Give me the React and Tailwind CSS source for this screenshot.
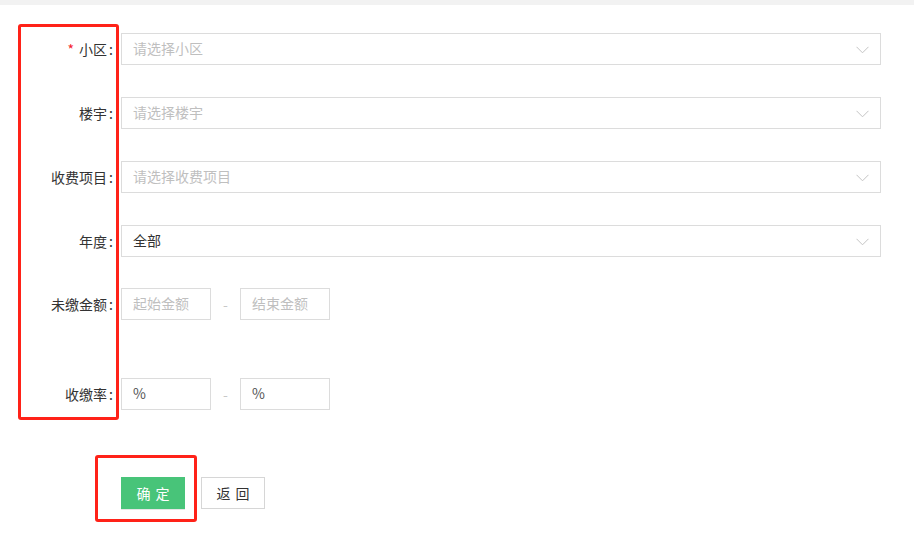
import React from "react";

const Chevron = () => (
  <svg width="13" height="8" viewBox="0 0 13 8" className="absolute right-[11px] top-[12px]">
    <polyline points="0.5,0.8 6.5,6.8 12.5,0.8" fill="none" stroke="#c4c4c4" strokeWidth="1" />
  </svg>
);

const Label = ({ children, required }) => (
  <div className="w-[114px] shrink-0 text-right text-[14px] text-[#333] leading-[30px]">
    {required && <span className="text-[#f5222d] mr-[5px]">*</span>}
    {children}
    <span className="pl-[2px] pr-[1px]">:</span>
  </div>
);

const SelectRow = ({ label, placeholder, value, required, className = "" }) => (
  <div className={"flex items-center h-[32px] " + className}>
    <Label required={required}>{label}</Label>
    <div className="relative ml-[7px] w-[760px] h-[32px] border border-[#dcdcdc] bg-white">
      <div className={"pl-[11px] text-[14px] leading-[29px] " + (value ? "text-[#333]" : "text-[#bfbfbf]")}>
        {value || placeholder}
      </div>
      <Chevron />
    </div>
  </div>
);

const SmallInput = ({ text, placeholder }) => (
  <div className="w-[90px] h-[32px] border border-[#dcdcdc] bg-white">
    <div className={"pl-[11px] text-[14px] leading-[29px] " + (placeholder ? "text-[#bfbfbf]" : "text-[#555]")}>
      {text}
    </div>
  </div>
);

const RangeRow = ({ label, a, b, placeholder, className = "" }) => (
  <div className={"flex items-center h-[32px] " + className}>
    <Label>{label}</Label>
    <div className="ml-[7px] flex items-center">
      <SmallInput text={a} placeholder={placeholder} />
      <div className="w-[29px] text-center text-[14px] text-[#c8c8c8]">-</div>
      <SmallInput text={b} placeholder={placeholder} />
    </div>
  </div>
);

export default function App() {
  return (
    <div
      className="relative w-[914px] h-[545px] bg-white overflow-hidden"
      style={{ fontFamily: '"Microsoft YaHei", "Noto Sans CJK SC", "Noto Sans", sans-serif' }}
    >
      <div className="h-[5px] bg-[#f2f2f2]" />
      <div className="pt-[28px]">
        <SelectRow label="小区" placeholder="请选择小区" required className="mb-[32px]" />
        <SelectRow label="楼宇" placeholder="请选择楼宇" className="mb-[32px]" />
        <SelectRow label="收费项目" placeholder="请选择收费项目" className="mb-[32px]" />
        <SelectRow label="年度" value="全部" className="mb-[31px]" />
        <RangeRow label="未缴金额" a="起始金额" b="结束金额" placeholder className="mb-[58px]" />
        <RangeRow label="收缴率" a="%" b="%" />
        <div className="flex mt-[67px] ml-[121px] gap-[16px]">
          <button className="w-[64px] h-[32px] pl-[5px] bg-[#48c479] text-white text-[14px] tracking-[5px] leading-[30px] shadow-[0_1px_0_#e6e6e6]">
            确定
          </button>
          <button className="w-[64px] h-[32px] pl-[5px] bg-white border border-[#d6d6d6] text-[#333] text-[14px] tracking-[5px] leading-[28px]">
            返回
          </button>
        </div>
      </div>

      {/* annotation overlays */}
      <div className="absolute left-[18px] top-[24px] w-[101px] h-[396px] border-[3px] border-[#ff2218] rounded-[3px] pointer-events-none" />
      <div className="absolute left-[95px] top-[455px] w-[102px] h-[67px] border-[3px] border-[#ff2218] rounded-[3px] pointer-events-none" />
    </div>
  );
}
